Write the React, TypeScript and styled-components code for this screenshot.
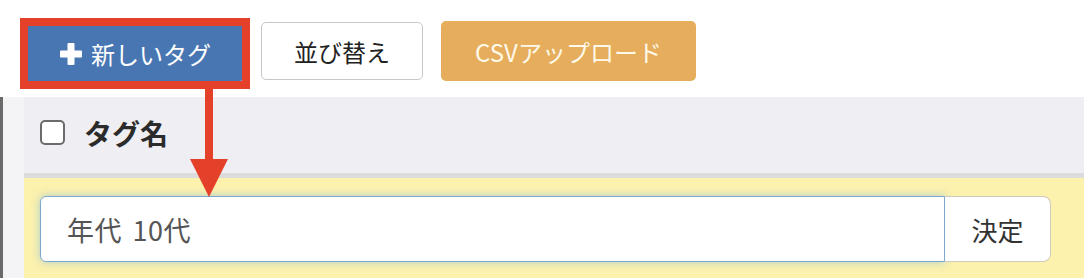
import * as React from "react";
import styled, { createGlobalStyle } from "styled-components";

const GlobalStyle = createGlobalStyle`
  html, body {
    margin: 0;
    padding: 0;
    background: #ffffff;
  }
  body {
    font-family: "Noto Sans CJK JP", "Noto Sans", "Liberation Sans", sans-serif;
    overflow: hidden;
  }
`;

const Page = styled.div`
  position: relative;
  width: 1084px;
  height: 278px;
  overflow: hidden;
`;

const Toolbar = styled.div`
  box-sizing: border-box;
  height: 97px;
  display: flex;
  align-items: flex-start;
  gap: 18px;
  padding: 22px 0 0 28px;
`;

const Highlight = styled.div`
  position: relative;
  margin-top: 4px;
`;

const Frame = styled.div`
  position: absolute;
  top: -8px;
  left: -8px;
  right: -7px;
  bottom: -8px;
  border: 8px solid #e4402a;
  pointer-events: none;
`;

const BaseButton = styled.button`
  box-sizing: border-box;
  display: flex;
  align-items: center;
  justify-content: center;
  font-family: inherit;
  font-size: 24px;
  border-radius: 5px;
  cursor: pointer;
  padding: 0;
`;

const PrimaryButton = styled(BaseButton)`
  width: 215px;
  height: 55px;
  gap: 9px;
  background: #4876b2;
  border: none;
  color: #ffffff;
  border-radius: 0 0 3px 0;
`;

const SortButton = styled(BaseButton)`
  width: 162px;
  height: 58px;
  background: #ffffff;
  border: 1px solid #c8c8c8;
  color: #222222;
`;

const CsvButton = styled(BaseButton)`
  width: 255px;
  height: 60px;
  margin-top: -1px;
  background: #e5ad5c;
  border: none;
  color: #fff9ea;
`;

const Panel = styled.div`
  border-left: 3px solid #6a6a6a;
  background: #f4f4f6;
  padding-left: 21px;
`;

const HeaderRow = styled.div`
  box-sizing: border-box;
  height: 81px;
  display: flex;
  align-items: center;
  gap: 19px;
  padding: 0 0 5px 16px;
  background: #efeff3;
  border-bottom: 5px solid #dcdcdc;
`;

const CheckBox = styled.span`
  box-sizing: border-box;
  width: 25px;
  height: 25px;
  border: 2px solid #6b6b6b;
  border-radius: 5px;
  background: #ffffff;
`;

const ColumnTitle = styled.span`
  font-size: 28px;
  font-weight: 700;
  color: #2b2b2b;
`;

const EditRow = styled.div`
  display: flex;
  padding: 18px 0 30px 16px;
  background: #fcf1ad;
`;

const TagInput = styled.input`
  box-sizing: border-box;
  width: 905px;
  height: 66px;
  padding: 0 0 0 26px;
  font-family: inherit;
  font-size: 27px;
  letter-spacing: 0.5px;
  word-spacing: 4px;
  color: #555555;
  background: #ffffff;
  border: 1px solid #7fa8cf;
  border-radius: 6px 0 0 6px;
  box-shadow: 0 0 8px rgba(102, 175, 233, 0.55);
  outline: none;
`;

const SubmitButton = styled(BaseButton)`
  width: 106px;
  height: 66px;
  font-size: 26px;
  color: #333333;
  background: #ffffff;
  border: 1px solid #cfcac0;
  border-left: none;
  border-radius: 0 8px 8px 0;
`;

const Arrow = styled.svg`
  position: absolute;
  left: 188px;
  top: 88px;
  pointer-events: none;
`;

const PlusIcon = () => (
  <svg width="22" height="22" viewBox="0 0 22 22">
    <rect x="7.5" y="0" width="7" height="22" rx="1" fill="#ffffff" />
    <rect x="0" y="7.5" width="22" height="7" rx="1" fill="#ffffff" />
  </svg>
);

export default function App() {
  return (
    <Page>
      <GlobalStyle />
      <Toolbar>
        <Highlight>
          <PrimaryButton>
            <PlusIcon />
            新しいタグ
          </PrimaryButton>
          <Frame />
        </Highlight>
        <SortButton>並び替え</SortButton>
        <CsvButton>CSVアップロード</CsvButton>
      </Toolbar>
      <Panel>
        <HeaderRow>
          <CheckBox />
          <ColumnTitle>タグ名</ColumnTitle>
        </HeaderRow>
        <EditRow>
          <TagInput defaultValue="年代 10代" />
          <SubmitButton>決定</SubmitButton>
        </EditRow>
      </Panel>
      <Arrow width="42" height="110" viewBox="0 0 42 110">
        <rect x="17" y="0" width="8" height="72" fill="#e4402a" />
        <polygon points="2,71 40,71 21,109" fill="#e4402a" />
      </Arrow>
    </Page>
  );
}
